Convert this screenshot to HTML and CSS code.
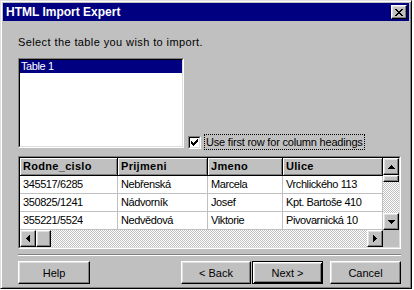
FILE: index.html
```html
<!DOCTYPE html>
<html>
<head>
    <title>HTML Import Expert</title>
    <link rel="stylesheet" href="styles.css">
</head>
<body>
<div class="window">
    <div class="titlebar">
        <span class="title">HTML Import Expert</span>
        <button class="close raised">
            <svg width="8" height="7" viewBox="0 0 8 7"><path d="M0 0h2v1h1v1h2v-1h1v-1h2v1h-1v1h-1v1h-1v1h1v1h1v1h1v1h-2v-1h-1v-1h-2v1h-1v1h-2v-1h1v-1h1v-1h1v-1h-1v-1h-1v-1h-1z" fill="#000"/></svg>
        </button>
    </div>

    <div class="dialog">
        <p class="prompt">Select the table you wish to import.</p>

        <div class="middle">
            <div class="sunken listbox">
                <div class="inner">
                    <div class="item selected">Table 1</div>
                </div>
            </div>
            <label class="check">
                <span class="sunken box">
                    <span class="inner">
                        <svg width="7" height="7" viewBox="0 0 7 7"><path d="M6 0h1v3h-1v1h-1v1h-1v1h-1v1h-1v-1h-1v-1h-1v-3h1v1h1v1h1v-1h1v-1h1v-1h1z" fill="#000"/></svg>
                    </span>
                </span>
                <span class="focus">Use first row for column headings</span>
            </label>
        </div>

        <div class="sunken gridbox">
            <div class="inner grid">
                <div class="head">Rodne_cislo</div>
                <div class="head">Prijmeni</div>
                <div class="head">Jmeno</div>
                <div class="head">Ulice</div>

                <div class="cell">345517/6285</div>
                <div class="cell">Nebřenská</div>
                <div class="cell">Marcela</div>
                <div class="cell">Vrchlického 113</div>

                <div class="cell">350825/1241</div>
                <div class="cell">Nádvorník</div>
                <div class="cell">Josef</div>
                <div class="cell">Kpt. Bartoše 410</div>

                <div class="cell">355221/5524</div>
                <div class="cell">Nedvědová</div>
                <div class="cell">Viktorie</div>
                <div class="cell">Pivovarnická 10</div>

                <div class="vscroll">
                    <div class="raised arrow"><svg width="7" height="4" viewBox="0 0 7 4"><path d="M3 0h1v1h1v1h1v1h1v1h-7v-1h1v-1h1v-1h1z" fill="#000"/></svg></div>
                    <div class="raised vthumb"></div>
                    <div class="track"></div>
                    <div class="raised arrow"><svg width="7" height="4" viewBox="0 0 7 4"><path d="M0 0h7v1h-1v1h-1v1h-1v1h-1v-1h-1v-1h-1v-1h-1z" fill="#000"/></svg></div>
                </div>

                <div class="hscroll">
                    <div class="raised arrow"><svg width="4" height="7" viewBox="0 0 4 7"><path d="M3 0h1v7h-1v-1h-1v-1h-1v-1h-1v-1h1v-1h1v-1h1z" fill="#000"/></svg></div>
                    <div class="raised hthumb"></div>
                    <div class="track"></div>
                    <div class="raised arrow"><svg width="4" height="7" viewBox="0 0 4 7"><path d="M0 0h1v1h1v1h1v1h1v1h-1v1h-1v1h-1v1h-1z" fill="#000"/></svg></div>
                </div>
                <div class="corner"></div>
            </div>
        </div>

        <div class="sep"></div>

        <div class="buttons">
            <button class="raised btn help">Help</button>
            <button class="raised btn back">&lt; Back</button>
            <button class="btn next">Next &gt;</button>
            <button class="raised btn cancel">Cancel</button>
        </div>
    </div>
</div>
</body>
</html>
```

FILE: styles.css
```css
* { box-sizing: border-box; }
body { margin: 0; background: #fff; font-family: "Liberation Sans", Arial, sans-serif; font-size: 11px; color: #000; }

/* window frame */
.window {
    width: 412px; height: 289px; padding: 2px;
    background: #c0c0c0;
    border: 1px solid; border-color: #dfdfdf #000 #000 #dfdfdf;
    box-shadow: inset 1px 1px #fff, inset -1px -1px #808080;
    display: flex; flex-direction: column;
}
.titlebar {
    height: 18px; padding: 0 2px 0 3px;
    background: #000080; color: #fff;
    display: flex; align-items: center; justify-content: space-between;
}
.title { font-weight: bold; font-size: 12px; }

/* 3d borders */
.raised {
    background: #c0c0c0;
    border: 1px solid; border-color: #fff #000 #000 #fff;
    box-shadow: inset -1px -1px #808080, inset 1px 1px #dfdfdf;
}
.sunken { border: 1px solid; border-color: #808080 #fff #fff #808080; }
.sunken > .inner {
    display: block; height: 100%; background: #fff;
    border: 1px solid; border-color: #000 #dfdfdf #dfdfdf #000;
}

.close { width: 16px; height: 14px; padding: 0; display: flex; align-items: center; justify-content: center; }

/* dialog body */
.dialog { flex: 1; padding: 0 8px 2px 15px; display: flex; flex-direction: column; }
.prompt { margin: 15px 0 0; line-height: 13px; letter-spacing: 0.4px; }

.middle { margin-top: 9px; display: flex; align-items: flex-end; gap: 4px; }
.listbox { width: 166px; height: 90px; }
.item { height: 13px; line-height: 13px; padding-left: 1px; letter-spacing: -0.4px; }
.selected { background: #000080; color: #fff; }

.check { display: flex; align-items: center; gap: 3px; margin-bottom: -2px; }
.box { width: 13px; height: 13px; }
.box .inner { display: flex; align-items: center; justify-content: center; }
.focus { border: 1px dotted #000; height: 16px; line-height: 14px; padding: 0 1px; letter-spacing: -0.2px; }

/* data grid */
.gridbox { margin-top: 8px; height: 93px; }
.gridbox > .grid {
    display: grid; overflow: hidden;
    grid-template-columns: 98px 90px 75px 100px 16px;
    grid-template-rows: 18px 18px 18px 18px 17px;
}
.head {
    background: #c0c0c0; font-weight: bold; letter-spacing: 0.3px;
    padding-left: 3px; line-height: 16px; white-space: nowrap;
    border-right: 1px solid #000; border-bottom: 1px solid #000;
    box-shadow: inset 1px 1px #fff, inset -1px -1px #808080;
}
.cell {
    padding-left: 3px; line-height: 17px; white-space: nowrap; overflow: hidden;
    letter-spacing: -0.4px;
    border-right: 1px solid #c0c0c0; border-bottom: 1px solid #c0c0c0;
}
.track { flex: 1; background: repeating-conic-gradient(#c0c0c0 0 25%, #fff 0 50%) 0 0 / 2px 2px; }
.arrow { display: flex; align-items: center; justify-content: center; }
.vscroll { grid-column: 5; grid-row: 1 / 5; display: flex; flex-direction: column; }
.vscroll .arrow { height: 17px; }
.vthumb { height: 7px; }
.hscroll { grid-column: 1 / 5; grid-row: 5; display: flex; }
.hscroll .arrow { width: 16px; }
.hthumb { width: 15px; }
.corner { grid-column: 5; grid-row: 5; background: #c0c0c0; }

.sep { margin-top: 5px; height: 2px; border-top: 1px solid #808080; border-bottom: 1px solid #fff; }

/* buttons */
.buttons { margin-top: 5px; display: flex; }
.btn { height: 23px; width: 71px; padding: 0; font: inherit; color: #000; }
.help { width: 72px; }
.back { margin-left: auto; width: 70px; }
.next {
    margin-left: 1px; background: #c0c0c0; border: 1px solid #000;
    box-shadow: inset 1px 1px #fff, inset -1px -1px #000, inset 2px 2px #dfdfdf, inset -2px -2px #808080;
}
.cancel { margin-left: 7px; }
```
